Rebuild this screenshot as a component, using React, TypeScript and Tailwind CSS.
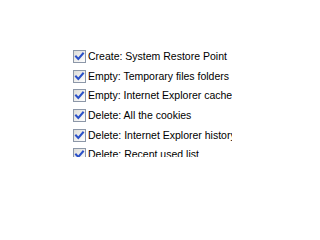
import React from 'react'

const items = [
  'Create: System Restore Point',
  'Empty: Temporary files folders',
  'Empty: Internet Explorer cache',
  'Delete: All the cookies',
  'Delete: Internet Explorer history',
  'Delete: Recent used list',
]

function CheckBox() {
  return (
    <span className="flex h-[13px] w-[13px] shrink-0 items-center justify-center border border-[#8c97a8] bg-gradient-to-br from-[#dcdcd8] to-white">
      <svg width="11" height="11" viewBox="0 0 11 11">
        <path d="M2 5.5 L4.3 8 L9 2.5" fill="none" stroke="#2a50c8" strokeWidth="2" strokeLinecap="square" />
      </svg>
    </span>
  )
}

export default function App() {
  return (
    <div className="h-[206px] w-[300px] bg-white pl-[73px] pt-[50px]" style={{ fontFamily: '"Liberation Sans", Arial, sans-serif' }}>
      <div className="h-[107px] w-[159px] overflow-hidden">
        {items.map((t) => (
          <div key={t} className="flex h-[19.7px] items-start gap-[2px] whitespace-nowrap">
            <CheckBox />
            <span className="text-[10.5px] leading-[13px] text-black">{t}</span>
          </div>
        ))}
      </div>
    </div>
  )
}
